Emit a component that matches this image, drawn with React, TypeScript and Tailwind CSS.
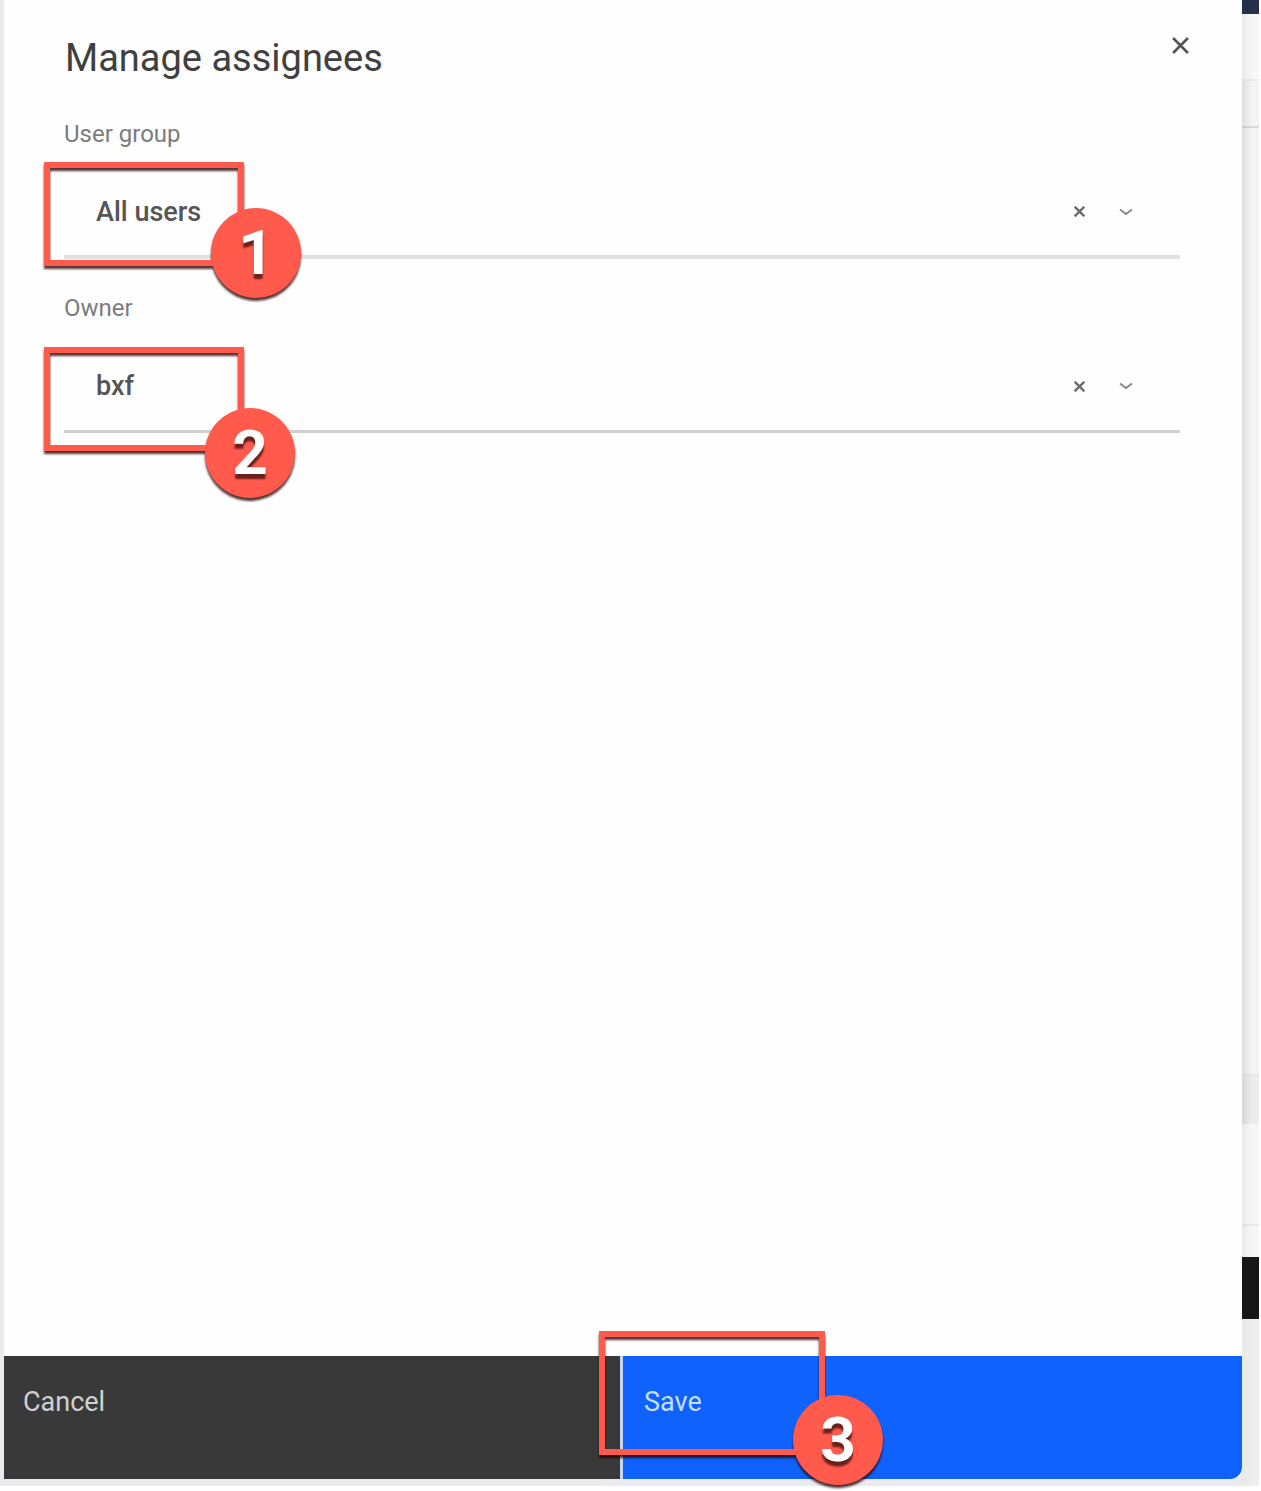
import { useState } from "react";

type CalloutProps = { step: number; box: string; badge: string };

function Callout({ step, box, badge }: CalloutProps) {
  return (
    <div
      aria-hidden="true"
      className={`pointer-events-none absolute z-10 border-6 border-[#ff5a4c] drop-shadow-[0_3px_1px_rgba(40,0,0,0.8)] ${box}`}
    >
      <div
        className={`absolute flex size-[90px] items-center justify-center rounded-full bg-[#ff5a4c] text-[62px] leading-none font-bold text-white [text-shadow:0_5px_2px_#6a201b] ${badge}`}
      >
        {step}
      </div>
    </div>
  );
}

function Cross({ className }: { className: string }) {
  return (
    <svg viewBox="0 0 16 16" className={className} fill="none" stroke="currentColor" aria-hidden="true">
      <path d="M1 1l14 14M15 1L1 15" />
    </svg>
  );
}

type FieldProps = {
  id: string;
  label: string;
  initial: string;
  line: string;
  callout: CalloutProps;
};

function Field({ id, label, initial, line, callout }: FieldProps) {
  const [value, setValue] = useState(initial);
  return (
    <div>
      <label htmlFor={id} className="block text-2xl leading-8 text-[#7c7c7c]">
        {label}
      </label>
      <div className={`relative mt-[18px] flex h-[91px] items-center pr-[42px] pl-8 ${line}`}>
        <input
          id={id}
          type="text"
          value={value}
          onChange={(e) => setValue(e.target.value)}
          className="h-full min-w-0 flex-1 bg-transparent text-[27px] font-medium text-[#555] outline-none"
        />
        <button type="button" aria-label={`Clear ${label}`} onClick={() => setValue("")} className="flex size-6 items-center justify-center text-[#6c6c6c]">
          <Cross className="size-[11px] stroke-[3.5]" />
        </button>
        <button type="button" aria-label={`Open ${label}`} className="ml-[23px] flex size-6 items-center justify-center text-[#888]">
          <svg viewBox="0 0 14 8" className="h-2 w-3.5" fill="none" stroke="currentColor" strokeWidth="2" aria-hidden="true">
            <path d="M1 1.5l6 4.5 6-4.5" />
          </svg>
        </button>
        <Callout {...callout} />
      </div>
    </div>
  );
}

function Backdrop() {
  return (
    <div aria-hidden="true" className="flex w-[17px] flex-col bg-linear-to-r from-[#e0e0e0] to-[#f4f4f4] to-60%">
      <div className="h-3.5 bg-[#25304a]" />
      <div className="h-[67px] border-b-2 border-black/5 bg-white/30" />
      <div className="h-[47px] border-b-2 border-black/10" />
      <div className="flex-1 border-b-2 border-black/5" />
      <div className="h-12 bg-black/3" />
      <div className="h-[102px] border-b-2 border-black/5 bg-white/30" />
      <div className="h-[31px] bg-white/30" />
      <div className="h-[62px] bg-[#171717]" />
      <div className="h-[167px] bg-[#ebebed]/70" />
    </div>
  );
}

export default function App() {
  return (
    <div className="flex min-h-screen bg-white pr-0.5 pb-[5px] font-[Roboto,'Noto_Sans',sans-serif]">
      <div className="flex flex-1 bg-[#ebebee] pl-1">
        <div role="dialog" aria-labelledby="dialog-title" className="mb-[7px] flex flex-1 flex-col rounded-br-lg bg-[#fefefe]">
          <header className="flex items-start justify-between pt-[30px] pr-[47px] pl-[61px]">
            <h1 id="dialog-title" className="pt-1 text-[38px] leading-12 text-[#404040]">
              Manage assignees
            </h1>
            <button type="button" aria-label="Close" className="flex size-[30px] items-center justify-center text-[#555]">
              <Cross className="size-[17px] stroke-[2.5]" />
            </button>
          </header>
          <div className="flex flex-1 flex-col gap-[33px] pt-9 pr-[62px] pl-[60px]">
            <Field
              id="user-group"
              label="User group"
              initial="All users"
              line="border-b-4 border-[#e0e0e0]"
              callout={{ step: 1, box: "-left-5 -top-1.5 h-[104px] w-[200px]", badge: "-right-[63px] -bottom-[38px]" }}
            />
            <Field
              id="owner"
              label="Owner"
              initial="bxf"
              line="border-b-3 border-[#d0d0d0]"
              callout={{ step: 2, box: "-left-5 top-[5px] h-[104px] w-[200px]", badge: "-right-[57px] -bottom-[53px]" }}
            />
          </div>
          <footer className="grid h-[123px] grid-cols-2 text-[27px] leading-8">
            <button type="button" className="flex items-start border-r-3 border-[#c5d6ee] bg-[#393939] pt-[30px] pl-[19px] text-[#d0d0d0]">
              Cancel
            </button>
            <div className="relative flex">
              <button type="button" className="flex flex-1 items-start rounded-br-xl bg-[#0f62fe] pt-[30px] pl-[21px] text-[#c3deff]">
                Save
              </button>
              <Callout step={3} box="-left-6 -top-[25px] h-[124px] w-[226px]" badge="-right-16 -bottom-9" />
            </div>
          </footer>
        </div>
        <Backdrop />
      </div>
    </div>
  );
}
